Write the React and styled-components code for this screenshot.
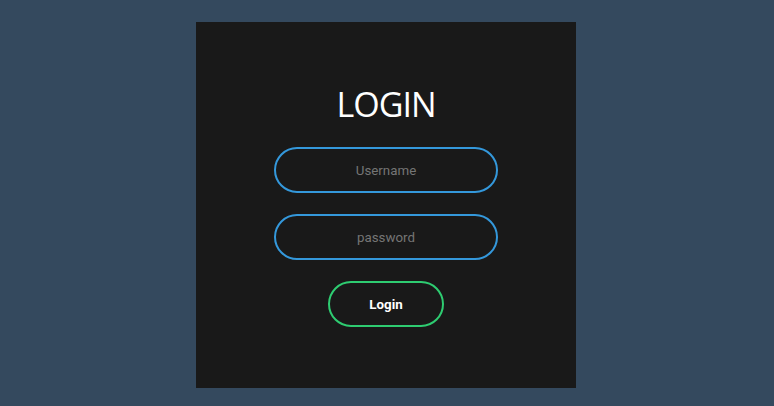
import React from "react";
import styled, { createGlobalStyle } from "styled-components";

const Global = createGlobalStyle`
  html, body { margin: 0; padding: 0; background: #34495e; }
  body { font-family: Roboto, "Liberation Sans", Arial, sans-serif; }
`;

const Page = styled.div`
  display: flex;
  justify-content: center;
  padding: 22px 2px 0 0;
  height: 406px;
  box-sizing: border-box;
`;

const Card = styled.form`
  width: 380px;
  height: 366px;
  box-sizing: border-box;
  background: #191919;
  display: flex;
  flex-direction: column;
  align-items: center;
  padding-top: 62px;
`;

const Title = styled.h1`
  margin: 0 0 23px;
  color: #ffffff;
  font-family: "Open Sans", "Noto Sans", sans-serif;
  font-weight: 400;
  font-size: 34px;
  letter-spacing: -1px;
  line-height: 40px;
  text-transform: uppercase;
`;

const Field = styled.input`
  width: 224px;
  height: 46px;
  box-sizing: border-box;
  margin-bottom: 21px;
  background: none;
  border: 2px solid #3498db;
  border-radius: 24px;
  outline: none;
  text-align: center;
  color: #ffffff;
  font-family: Roboto, "Liberation Sans", Arial, sans-serif;
  font-size: 13.33px;
  &::placeholder { color: #757575; }
`;

const Submit = styled.button`
  width: 116px;
  height: 46px;
  box-sizing: border-box;
  background: none;
  border: 2px solid #2ecc71;
  border-radius: 24px;
  color: #ffffff;
  font-family: Roboto, "Liberation Sans", Arial, sans-serif;
  font-weight: 700;
  font-size: 13.33px;
  cursor: pointer;
`;

export default function App() {
  return (
    <>
      <Global />
      <Page>
        <Card onSubmit={(e) => e.preventDefault()}>
          <Title>Login</Title>
          <Field type="text" placeholder="Username" />
          <Field type="password" placeholder="password" />
          <Submit type="submit">Login</Submit>
        </Card>
      </Page>
    </>
  );
}
